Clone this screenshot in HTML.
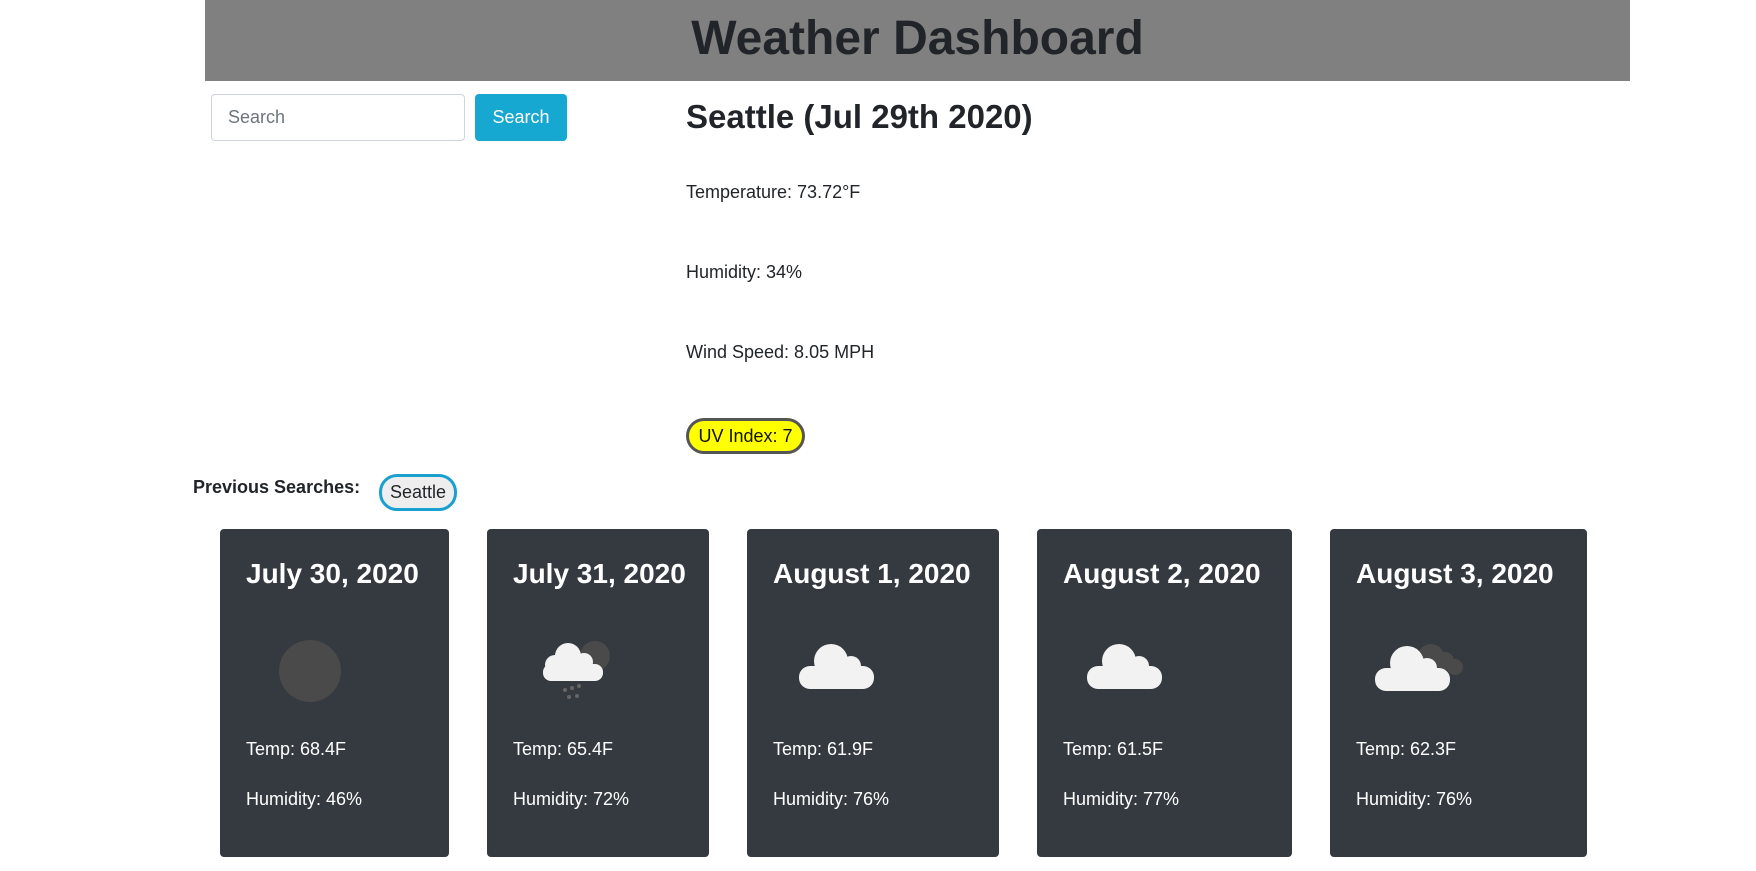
<!DOCTYPE html>
<html><head><meta charset="utf-8"><style>
body{margin:0;width:1756px;height:871px;background:#fff;font-family:"Liberation Sans",sans-serif;color:#212529;position:relative;overflow:hidden}
.a{position:absolute;white-space:nowrap}
.hdr{left:205px;top:0;width:1425px;height:81px;background:#808080;text-align:center;font-size:48px;font-weight:bold;line-height:78px;color:#212529}
.inp{left:211px;top:94px;border:1px solid #ced4da;border-radius:4px;font-size:18px;color:#6c757d;line-height:45px;padding-left:16px;box-sizing:border-box;width:254px;height:47px}
.btn{left:475px;top:94px;width:92px;height:47px;background:#17a8d2;border-radius:4px;color:#fff;font-size:18px;text-align:center;line-height:47px}
.h2{left:686px;top:95px;font-size:33px;font-weight:bold;line-height:44px}
.p{left:686px;font-size:18px;line-height:22px}
.uv{left:686px;top:418px;width:119px;height:36px;box-sizing:border-box;background:#ffff00;border:3px solid #555;border-radius:18px;font-size:18px;line-height:30px;text-align:center;color:#111}
.prev{left:193px;top:476px;font-size:18px;font-weight:bold;line-height:22px}
.sb{left:379px;top:474px;width:78px;height:37px;box-sizing:border-box;border:3px solid #1aa0cf;border-radius:18px;background:#eee;font-size:18px;text-align:center;line-height:31px}
.card{top:529px;height:328px;background:#343a40;border-radius:4px;color:#fff}
.card .t{position:absolute;left:26px;top:29px;font-size:28px;font-weight:bold;white-space:nowrap}
.card .l{position:absolute;left:26px;font-size:18px;white-space:nowrap}
.card svg{position:absolute}
</style></head><body>
<div class="a hdr">Weather Dashboard</div>
<div class="a inp">Search</div>
<div class="a btn">Search</div>
<div class="a h2">Seattle (Jul 29th 2020)</div>
<div class="a p" style="top:181px">Temperature: 73.72°F</div>
<div class="a p" style="top:261px">Humidity: 34%</div>
<div class="a p" style="top:341px">Wind Speed: 8.05 MPH</div>
<div class="a uv">UV Index: 7</div>
<div class="a prev">Previous Searches:</div>
<div class="a sb">Seattle</div>

<div class="a card" style="left:220px;width:229px">
<div class="t">July 30, 2020</div>
<svg style="left:58px;top:110px" width="64" height="64"><circle cx="32" cy="32" r="31" fill="#4a4a4a"/></svg>
<div class="l" style="top:210px">Temp: 68.4F</div>
<div class="l" style="top:260px">Humidity: 46%</div>
</div>

<div class="a card" style="left:487px;width:222px">
<div class="t">July 31, 2020</div>
<svg style="left:54px;top:105px" width="80" height="70"><circle cx="54" cy="22" r="15" fill="#4a4a4a"/>
<g fill="#f2f2f2"><circle cx="27" cy="22" r="13"/><circle cx="43" cy="28" r="9"/><circle cx="14" cy="31" r="10"/><rect x="2" y="30" width="60" height="17" rx="8"/></g>
<g fill="#666"><circle cx="24" cy="56" r="2"/><circle cx="31" cy="54" r="2"/><circle cx="38" cy="52" r="2"/><circle cx="28" cy="63" r="2"/><circle cx="36" cy="62" r="2"/></g></svg>
<div class="l" style="top:210px">Temp: 65.4F</div>
<div class="l" style="top:260px">Humidity: 72%</div>
</div>

<div class="a card" style="left:747px;width:252px">
<div class="t">August 1, 2020</div>
<svg style="left:52px;top:113px" width="76" height="50"><g fill="#f2f2f2"><circle cx="32" cy="19" r="17"/><circle cx="52" cy="24" r="10"/><rect x="0" y="24" width="75" height="23" rx="11"/></g></svg>
<div class="l" style="top:210px">Temp: 61.9F</div>
<div class="l" style="top:260px">Humidity: 76%</div>
</div>

<div class="a card" style="left:1037px;width:255px">
<div class="t">August 2, 2020</div>
<svg style="left:50px;top:113px" width="76" height="50"><g fill="#f2f2f2"><circle cx="32" cy="19" r="17"/><circle cx="52" cy="24" r="10"/><rect x="0" y="24" width="75" height="23" rx="11"/></g></svg>
<div class="l" style="top:210px">Temp: 61.5F</div>
<div class="l" style="top:260px">Humidity: 77%</div>
</div>

<div class="a card" style="left:1330px;width:257px">
<div class="t">August 3, 2020</div>
<svg style="left:45px;top:110px" width="100" height="55"><g fill="#4a4a4a"><circle cx="56" cy="18" r="13"/><circle cx="70" cy="22" r="9"/><circle cx="80" cy="28" r="8"/></g><g fill="#f2f2f2"><circle cx="32" cy="24" r="17"/><circle cx="52" cy="29" r="10"/><rect x="0" y="29" width="75" height="23" rx="11"/></g></svg>
<div class="l" style="top:210px">Temp: 62.3F</div>
<div class="l" style="top:260px">Humidity: 76%</div>
</div>
</body></html>
